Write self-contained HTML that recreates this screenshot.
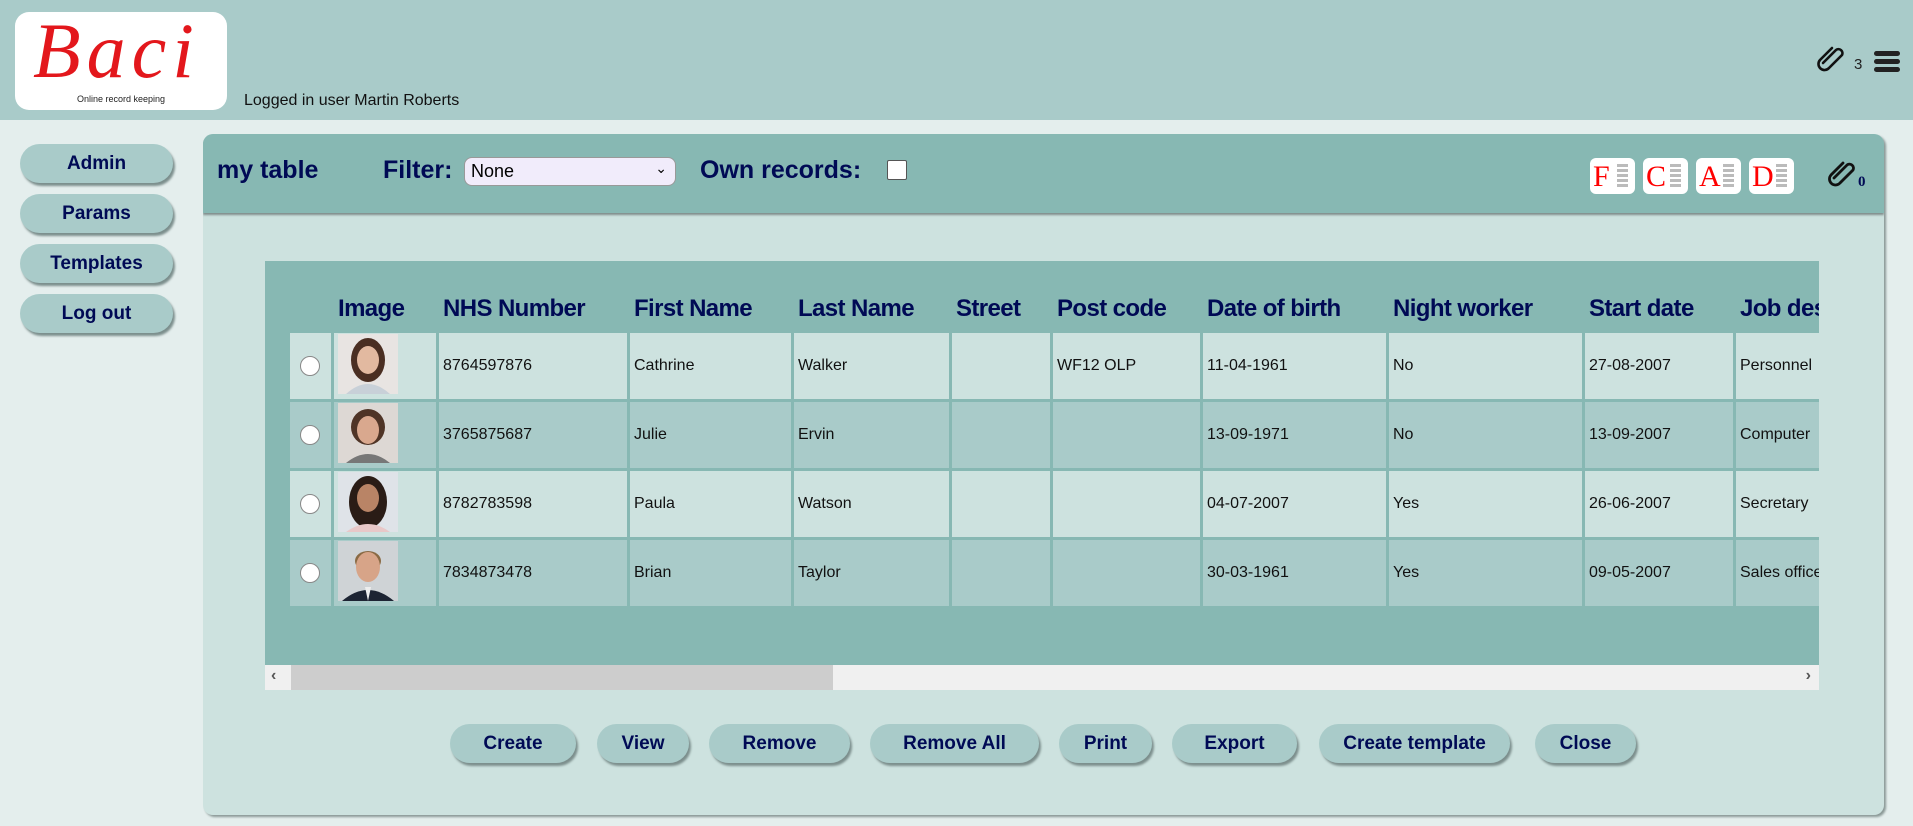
<!DOCTYPE html>
<html><head><meta charset="utf-8"><style>
*{box-sizing:border-box;margin:0;padding:0}
body{width:1913px;height:826px;overflow:hidden;background:#e4eeed;font-family:"Liberation Sans",sans-serif;position:relative}
.hdr{position:absolute;left:0;top:0;width:1913px;height:120px;background:#a9cbc9}
.logo{position:absolute;left:15px;top:12px;width:212px;height:98px;background:#fff;border-radius:14px}
.logo .b{position:absolute;left:18px;top:-6px;font:italic 78px "Liberation Serif",serif;color:#e3171c;letter-spacing:6px}
.logo .s{position:absolute;left:0;width:212px;top:82px;text-align:center;font-size:9px;color:#222}
.user{position:absolute;left:244px;top:92px;font-size:16px;color:#111}
.side{position:absolute;left:20px;width:153px;height:39px;border-radius:20px;background:#a9cbc9;box-shadow:2px 3px 2px #7c8f8d;color:#000a55;font-size:19px;font-weight:bold;text-align:center;line-height:39px}
.panel{position:absolute;left:203px;top:134px;width:1681px;height:681px;background:#cde2df;border-radius:10px;box-shadow:2px 2px 2px #8a9896;overflow:hidden}
.ph{position:absolute;left:0;top:0;width:1681px;height:79px;background:#87b8b3;box-shadow:0 2px 2px #7f8d8b}
.t{position:absolute;color:#000a55;font-weight:bold;font-size:25px}
.sel{position:absolute;left:261px;top:23px;width:212px;height:29px;border-radius:8px;background:#f1ecfb;border:1px solid #999;font-size:18px;padding:3px 6px;color:#000}
.chk{position:absolute;left:684px;top:26px;width:20px;height:20px;background:#fff;border:1px solid #555;border-radius:2px}
.ic{position:absolute;top:24px;width:45px;height:36px;background:#fff;border-radius:6px}
.ic span{position:absolute;left:3px;top:2px;font:30px "Liberation Serif",serif;color:#f00}
.ic i{position:absolute;left:27px;top:6px;width:11px;height:24px;background:repeating-linear-gradient(#bbb 0 3px,#fff 3px 5px)}
.tw{position:absolute;left:62px;top:127px;width:1554px;height:429px;background:#87b8b3;overflow:hidden}
table{position:absolute;left:22px;top:24px;border-collapse:separate;border-spacing:3px;table-layout:fixed;width:1652px}
th{height:42px;color:#000a55;font-size:24px;font-weight:bold;text-align:left;white-space:nowrap;overflow:hidden;padding-left:4px;letter-spacing:-0.6px}
td{height:66px;font-size:16px;color:#111;padding-left:4px;white-space:nowrap;overflow:hidden}
tr.l td{background:#cde2df} tr.d td{background:#a9cbc9}
.rad{width:20px;height:20px;border-radius:50%;background:#fff;border:1px solid #888;margin-left:6px}
.sb{position:absolute;left:0;top:404px;width:1554px;height:25px;background:#f0f0f0}
.btn{position:absolute;top:590px;height:39px;border-radius:20px;background:#a9cbc9;box-shadow:2px 3px 2px #7c8f8d;color:#000a55;font-size:19px;font-weight:bold;text-align:center;line-height:39px}
</style></head><body>
<div class="hdr">
 <div class="logo"><div class="b">Baci</div><div class="s">Online record keeping</div></div>
 <div class="user">Logged in user Martin Roberts</div>
 <svg style="position:absolute;left:1817px;top:46px" width="28" height="26" viewBox="0 0 28 26"><path d="M6 20 L19 7 A4 4 0 0 1 25 12 L12 25 A6 6 0 0 1 3 17 L15 5" fill="none" stroke="#111" stroke-width="2.6" stroke-linecap="round" transform="translate(0,-3)"/></svg>
 <div style="position:absolute;left:1854px;top:56px;font-size:15px;color:#222">3</div>
 <div style="position:absolute;left:1874px;top:51px;width:26px;height:5px;background:#222;border-radius:3px"></div>
 <div style="position:absolute;left:1874px;top:59px;width:26px;height:5px;background:#222;border-radius:3px"></div>
 <div style="position:absolute;left:1874px;top:67px;width:26px;height:5px;background:#222;border-radius:3px"></div>
</div>
<div class="side" style="top:144px">Admin</div>
<div class="side" style="top:194px">Params</div>
<div class="side" style="top:244px">Templates</div>
<div class="side" style="top:294px">Log out</div>
<div class="panel">
 <div class="ph">
  <div class="t" style="left:14px;top:22px">my table</div>
  <div class="t" style="left:180px;top:22px">Filter:</div>
  <div class="sel">None<span style="position:absolute;right:8px;top:2px;font-size:14px">&#8964;</span></div>
  <div class="t" style="left:497px;top:22px">Own records:</div>
  <div class="chk"></div>
  <div class="ic" style="left:1387px"><span>F</span><i></i></div>
  <div class="ic" style="left:1440px"><span>C</span><i></i></div>
  <div class="ic" style="left:1493px"><span>A</span><i></i></div>
  <div class="ic" style="left:1546px"><span>D</span><i></i></div>
  <svg style="position:absolute;left:1625px;top:24px" width="30" height="30" viewBox="0 0 30 30"><path d="M6 20 L19 7 A4 4 0 0 1 25 12 L12 25 A6 6 0 0 1 3 17 L15 5" fill="none" stroke="#111" stroke-width="2.8" stroke-linecap="round"/></svg>
  <div style="position:absolute;left:1655px;top:40px;font:bold 15px 'Liberation Serif',serif;color:#000a55">0</div>
 </div>
 <div class="tw">
  <table>
   <colgroup><col style="width:41px"><col style="width:102px"><col style="width:188px"><col style="width:161px"><col style="width:155px"><col style="width:98px"><col style="width:147px"><col style="width:183px"><col style="width:193px"><col style="width:148px"><col style="width:200px"></colgroup>
   <tr><th></th><th>Image</th><th>NHS Number</th><th>First Name</th><th>Last Name</th><th>Street</th><th>Post code</th><th>Date of birth</th><th>Night worker</th><th>Start date</th><th>Job description</th></tr>
   <tr class="l"><td><div class="rad"></div></td><td><svg width="60" height="60"><rect width="60" height="60" fill="#e8e4e2"/><ellipse cx="30" cy="26" rx="17" ry="22" fill="#4a2e22"/><ellipse cx="30" cy="26" rx="11" ry="14" fill="#e2b9a0"/><path d="M8 60 Q30 40 52 60Z" fill="#c8d0d8"/></svg></td><td>8764597876</td><td>Cathrine</td><td>Walker</td><td></td><td>WF12 OLP</td><td>11-04-1961</td><td>No</td><td>27-08-2007</td><td>Personnel</td></tr>
   <tr class="d"><td><div class="rad"></div></td><td><svg width="60" height="60"><rect width="60" height="60" fill="#ddd8d4"/><ellipse cx="30" cy="24" rx="17" ry="18" fill="#4f3426"/><ellipse cx="30" cy="27" rx="11" ry="14" fill="#d9a88e"/><path d="M8 60 Q30 42 52 60Z" fill="#777"/></svg></td><td>3765875687</td><td>Julie</td><td>Ervin</td><td></td><td></td><td>13-09-1971</td><td>No</td><td>13-09-2007</td><td>Computer</td></tr>
   <tr class="l"><td><div class="rad"></div></td><td><svg width="60" height="60"><rect width="60" height="60" fill="#dfe3e8"/><ellipse cx="30" cy="30" rx="19" ry="26" fill="#2a1c16"/><ellipse cx="30" cy="26" rx="11" ry="14" fill="#b98466"/><path d="M8 60 Q30 44 52 60Z" fill="#e8c8c8"/></svg></td><td>8782783598</td><td>Paula</td><td>Watson</td><td></td><td></td><td>04-07-2007</td><td>Yes</td><td>26-06-2007</td><td>Secretary</td></tr>
   <tr class="d"><td><div class="rad"></div></td><td><svg width="60" height="60"><rect width="60" height="60" fill="#cfd3d6"/><ellipse cx="30" cy="20" rx="13" ry="10" fill="#8a6a44"/><ellipse cx="30" cy="26" rx="12" ry="15" fill="#d7a488"/><path d="M4 60 Q30 38 56 60Z" fill="#1d2433"/><path d="M27 46 L30 60 L33 46Z" fill="#eee"/></svg></td><td>7834873478</td><td>Brian</td><td>Taylor</td><td></td><td></td><td>30-03-1961</td><td>Yes</td><td>09-05-2007</td><td>Sales officer</td></tr>
  </table>
  <div class="sb"><div style="position:absolute;left:26px;top:0;width:542px;height:25px;background:#cdcdcd"></div><div style="position:absolute;left:6px;top:2px;font-size:16px;color:#555;font-weight:bold">&#8249;</div><div style="position:absolute;right:8px;top:2px;font-size:16px;color:#555;font-weight:bold">&#8250;</div></div>
 </div>
 <div class="btn" style="left:247px;width:126px">Create</div>
 <div class="btn" style="left:394px;width:92px">View</div>
 <div class="btn" style="left:506px;width:141px">Remove</div>
 <div class="btn" style="left:667px;width:169px">Remove All</div>
 <div class="btn" style="left:856px;width:93px">Print</div>
 <div class="btn" style="left:969px;width:125px">Export</div>
 <div class="btn" style="left:1116px;width:191px">Create template</div>
 <div class="btn" style="left:1332px;width:101px">Close</div>
</div>
</body></html>
